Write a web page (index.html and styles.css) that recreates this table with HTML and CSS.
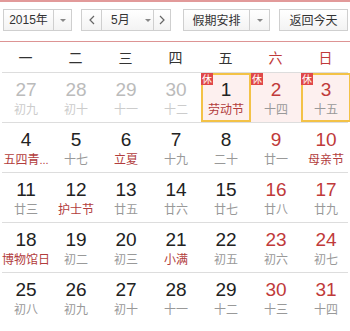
FILE: index.html
```html
<!DOCTYPE html>
<html lang="zh">
<head>
<meta charset="utf-8">
<link rel="stylesheet" href="styles.css">
</head>
<body>
<div class="cal">
  <div class="toolbar">
    <div class="box year">
      <span class="label">2015年</span>
      <span class="drop"><i class="tri"></i></span>
    </div>
    <div class="box month">
      <span class="nav"><svg width="6" height="10" viewBox="0 0 6 10"><polyline points="5,1 1,5 5,9" fill="none" stroke="#666" stroke-width="1.2"/></svg></span>
      <span class="label mlabel"><span class="mtext">5月</span><i class="tri"></i></span>
      <span class="nav"><svg width="6" height="10" viewBox="0 0 6 10"><polyline points="1,1 5,5 1,9" fill="none" stroke="#666" stroke-width="1.2"/></svg></span>
    </div>
    <div class="box holiday">
      <span class="label">假期安排</span>
      <span class="drop"><i class="tri"></i></span>
    </div>
    <div class="box today">返回今天</div>
  </div>
  <div class="grid">
    <div class="week">
      <span>一</span><span>二</span><span>三</span><span>四</span><span>五</span><span class="we">六</span><span class="we">日</span>
    </div>
    <div class="row">
      <div class="cell other"><b>27</b><em>初九</em></div>
      <div class="cell other"><b>28</b><em>初十</em></div>
      <div class="cell other"><b>29</b><em>十一</em></div>
      <div class="cell other"><b>30</b><em>十二</em></div>
      <div class="cell rest sel"><span class="badge">休</span><b>1</b><em class="fest">劳动节</em></div>
      <div class="cell rest we"><span class="badge">休</span><b>2</b><em>十四</em></div>
      <div class="cell rest sel we"><span class="badge">休</span><b>3</b><em>十五</em></div>
    </div>
    <div class="row">
      <div class="cell"><b>4</b><em class="fest">五四青<span class="dots">...</span></em></div>
      <div class="cell"><b>5</b><em>十七</em></div>
      <div class="cell"><b>6</b><em class="fest">立夏</em></div>
      <div class="cell"><b>7</b><em>十九</em></div>
      <div class="cell"><b>8</b><em>二十</em></div>
      <div class="cell we"><b>9</b><em>廿一</em></div>
      <div class="cell we"><b>10</b><em class="fest">母亲节</em></div>
    </div>
    <div class="row">
      <div class="cell"><b>11</b><em>廿三</em></div>
      <div class="cell"><b>12</b><em class="fest">护士节</em></div>
      <div class="cell"><b>13</b><em>廿五</em></div>
      <div class="cell"><b>14</b><em>廿六</em></div>
      <div class="cell"><b>15</b><em>廿七</em></div>
      <div class="cell we"><b>16</b><em>廿八</em></div>
      <div class="cell we"><b>17</b><em>廿九</em></div>
    </div>
    <div class="row">
      <div class="cell"><b>18</b><em class="fest">博物馆日</em></div>
      <div class="cell"><b>19</b><em>初二</em></div>
      <div class="cell"><b>20</b><em>初三</em></div>
      <div class="cell"><b>21</b><em class="fest">小满</em></div>
      <div class="cell"><b>22</b><em>初五</em></div>
      <div class="cell we"><b>23</b><em>初六</em></div>
      <div class="cell we"><b>24</b><em>初七</em></div>
    </div>
    <div class="row last">
      <div class="cell"><b>25</b><em>初八</em></div>
      <div class="cell"><b>26</b><em>初九</em></div>
      <div class="cell"><b>27</b><em>初十</em></div>
      <div class="cell"><b>28</b><em>十一</em></div>
      <div class="cell"><b>29</b><em>十二</em></div>
      <div class="cell we"><b>30</b><em>十三</em></div>
      <div class="cell we"><b>31</b><em>十四</em></div>
    </div>
  </div>
</div>
</body>
</html>
```
FILE: styles.css
```css
* { box-sizing: border-box; }
html, body { margin: 0; padding: 0; background: #fff; }
body {
  width: 350px;
  height: 331px;
  overflow: hidden;
  font-family: "Liberation Sans", Arial, "Noto Sans CJK SC", sans-serif;
  color: #333;
}
.cal { width: 350px; }
.toolbar {
  border-top: 2px solid #e29a9a;
  height: 41px;
  padding: 7px 2px 0 3px;
  display: flex;
  align-items: flex-start;
}
.box {
  height: 22px;
  border: 1px solid #cfcfcf;
  background: linear-gradient(#ffffff, #f3f3f3);
  display: flex;
  align-items: stretch;
  font-size: 12px;
  font-family: "Noto Sans CJK SC", sans-serif;
  color: #333;
  line-height: 20px;
  white-space: nowrap;
}
.box .label { display: flex; align-items: center; justify-content: center; }
.drop {
  border-left: 1px solid #cfcfcf;
  display: flex;
  align-items: center;
  justify-content: center;
}
.tri {
  display: inline-block;
  width: 0; height: 0;
  border-left: 3px solid transparent;
  border-right: 3px solid transparent;
  border-top: 3px solid #888;
  flex: none;
}
.year { width: 69px; }
.year .label { width: 49px; font-family: "Liberation Sans", "Noto Sans CJK SC", sans-serif; }
.year .drop { width: 18px; }
.month { width: 90px; margin-left: 9px; }
.nav { width: 19px; display: flex; align-items: center; justify-content: center; flex: none; }
.mlabel {
  width: 53px;
  flex: none;
  border-left: 1px solid #cfcfcf;
  border-right: 1px solid #cfcfcf;
  justify-content: flex-start !important;
  padding-left: 9px;
  gap: 15px;
  font-family: "Liberation Sans", "Noto Sans CJK SC", sans-serif;
}
.mtext { white-space: nowrap; flex: none; }
.month .nav:last-child { width: 16px; }
.holiday { width: 87px; margin-left: 12px; }
.holiday .label { width: 65px; }
.holiday .drop { width: 20px; }
.today { width: 71px; margin-left: 9px; justify-content: center; }
.grid { border-top: 1px solid #dd9494; }
.week {
  height: 31px;
  display: grid;
  grid-template-columns: repeat(7, 50px);
  margin: 0 2px;
  border-bottom: 1px solid #ddd;
  font-family: "Noto Sans CJK SC", sans-serif;
  font-size: 14px;
  color: #333;
}
.week span { display: flex; align-items: center; justify-content: center; margin-left: -3px; }
.week .we { color: #c03a3a; }
.row {
  display: grid;
  grid-template-columns: repeat(7, 50px);
  height: 50px;
  border-bottom: 1px solid #ddd;
  margin: 0 2px;
}
.row.last { border-bottom: none; }
.cell {
  position: relative;
  margin: 0 1px 0 -1px;
  display: flex;
  flex-direction: column;
  align-items: center;
  padding-top: 7px;
}
.cell b {
  font-weight: normal;
  font-size: 19px;
  line-height: 20px;
  color: #222;
}
.cell em {
  font-style: normal;
  font-size: 12px;
  line-height: 16px;
  margin-top: 1px;
  color: #999;
  font-family: "Noto Sans CJK SC", sans-serif;
  white-space: nowrap;
}
.cell em .dots { font-family: "Liberation Sans", sans-serif; font-size: 11px; }
.cell em.fest { color: #b23c3c; }
.cell.we b { color: #c03a3a; }
.cell.other b { color: #bbb; }
.cell.other em { color: #ccc; }
.cell.rest { background: #fdf0ef; }
.cell.sel { border: 2px solid #f3c247; padding-top: 5px; }
.badge {
  position: absolute;
  left: 0; top: 0;
  width: 12px; height: 12px;
  background: #e04848;
  color: #fff;
  font-size: 10px;
  line-height: 12px;
  text-align: center;
  font-family: "Noto Sans CJK SC", sans-serif;
}
.cell.sel .badge { left: -2px; top: -2px; }
```
